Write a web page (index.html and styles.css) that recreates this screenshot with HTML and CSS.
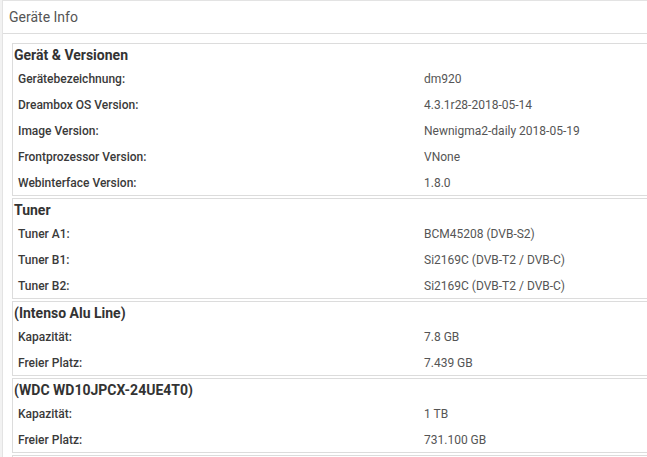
FILE: index.html
```html
<!DOCTYPE html>
<html>
<head>
<meta charset="utf-8">
<link rel="stylesheet" href="styles.css">
</head>
<body>
<div class="panel">
  <div class="panel-head">Geräte Info</div>
  <div class="panel-body">
    <div class="box">
      <div class="box-title">Gerät &amp; Versionen</div>
      <div class="row"><span class="lbl">Gerätebezeichnung:</span><span class="val">dm920</span></div>
      <div class="row"><span class="lbl">Dreambox OS Version:</span><span class="val">4.3.1r28-2018-05-14</span></div>
      <div class="row"><span class="lbl">Image Version:</span><span class="val">Newnigma2-daily 2018-05-19</span></div>
      <div class="row"><span class="lbl">Frontprozessor Version:</span><span class="val">VNone</span></div>
      <div class="row"><span class="lbl">Webinterface Version:</span><span class="val">1.8.0</span></div>
    </div>
    <div class="box">
      <div class="box-title">Tuner</div>
      <div class="row"><span class="lbl">Tuner A1:</span><span class="val">BCM45208 (DVB-S2)</span></div>
      <div class="row"><span class="lbl">Tuner B1:</span><span class="val">Si2169C (DVB-T2 / DVB-C)</span></div>
      <div class="row"><span class="lbl">Tuner B2:</span><span class="val">Si2169C (DVB-T2 / DVB-C)</span></div>
    </div>
    <div class="box">
      <div class="box-title">(Intenso Alu Line)</div>
      <div class="row"><span class="lbl">Kapazität:</span><span class="val">7.8 GB</span></div>
      <div class="row"><span class="lbl">Freier Platz:</span><span class="val">7.439 GB</span></div>
    </div>
    <div class="box">
      <div class="box-title">(WDC WD10JPCX-24UE4T0)</div>
      <div class="row"><span class="lbl">Kapazität:</span><span class="val">1 TB</span></div>
      <div class="row"><span class="lbl">Freier Platz:</span><span class="val">731.100 GB</span></div>
    </div>
    <div class="box box-last"></div>
  </div>
</div>
</body>
</html>
```
FILE: styles.css
```css
html, body {
  margin: 0;
  padding: 0;
}
body {
  width: 647px;
  height: 457px;
  overflow: hidden;
  background: #f2f2f2;
  font-family: Roboto, "Liberation Sans", sans-serif;
}
.panel {
  margin-left: 2px;
  height: 457px;
  background: #fff;
  border-left: 1px solid #e3e3e3;
  border-top: 1px solid #e3e3e3;
  box-sizing: border-box;
  overflow: hidden;
}
.panel-head {
  height: 32px;
  line-height: 32px;
  padding-left: 6px;
  font-size: 14px;
  color: #555;
  border-bottom: 1px solid #ddd;
}
.panel-body {
  padding: 9px 0 0 9px;
  display: flex;
  flex-direction: column;
  gap: 2px;
}
.box {
  border: 1px solid #dcdcdc;
  border-right: none;
  background: #fff;
}
.box-last {
  height: 20px;
}
.box-title {
  height: 21px;
  line-height: 23px;
  padding-left: 1px;
  font-size: 14px;
  font-weight: 700;
  color: #333;
  overflow: hidden;
}
.row {
  display: grid;
  grid-template-columns: 406px 1fr;
  height: 26px;
  line-height: 28px;
  padding-left: 5px;
  font-size: 12px;
  overflow: hidden;
}
.lbl {
  font-weight: 500;
  color: #3a3a3a;
}
.val {
  color: #555;
}
```
